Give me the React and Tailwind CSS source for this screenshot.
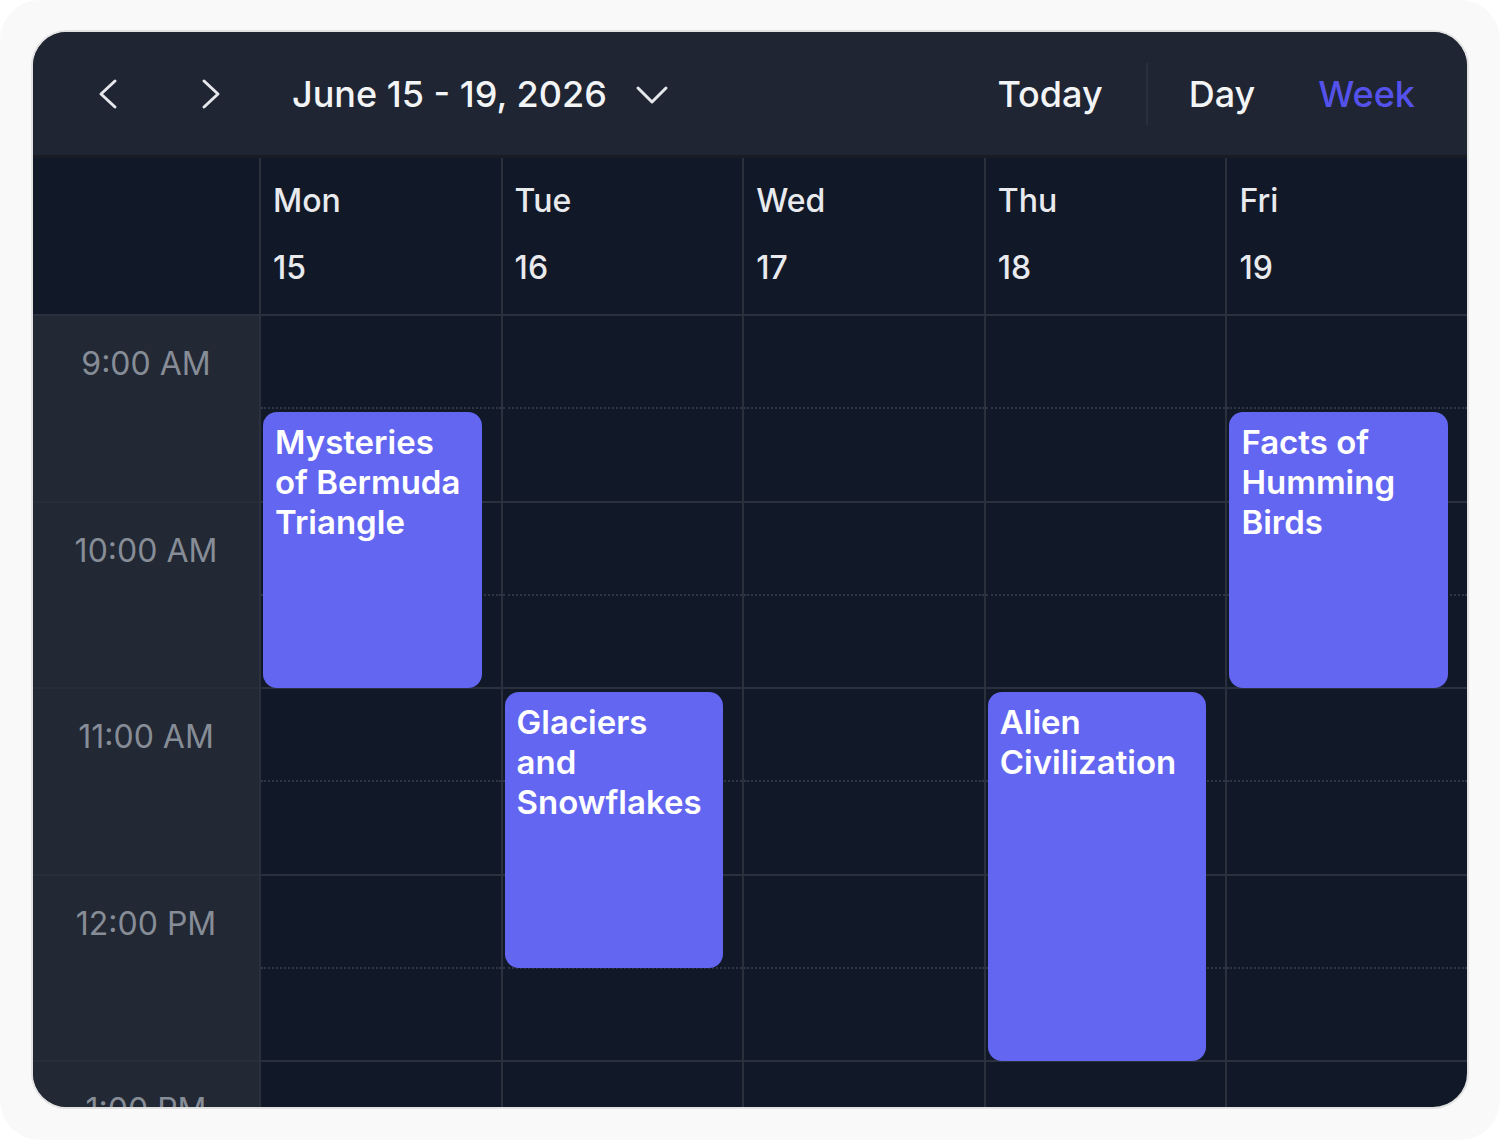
import React from "react";

const days = [
  { name: "Mon", date: "15" },
  { name: "Tue", date: "16" },
  { name: "Wed", date: "17" },
  { name: "Thu", date: "18" },
  { name: "Fri", date: "19" },
];

const hours = ["9:00 AM", "10:00 AM", "11:00 AM", "12:00 PM", "1:00 PM"];

const events = {
  0: [{ title: "Mysteries of Bermuda Triangle", top: 96, height: 276 }],
  1: [{ title: "Glaciers and Snowflakes", top: 376, height: 276 }],
  3: [{ title: "Alien Civilization", top: 376, height: 369 }],
  4: [{ title: "Facts of Humming Birds", top: 96, height: 276 }],
};

function ChevronLeft() {
  return (
    <svg width="24" height="32" viewBox="0 0 24 32" fill="none">
      <polyline points="19,3 5,16 19,29" stroke="#e5e7eb" strokeWidth="3" strokeLinecap="round" strokeLinejoin="round" />
    </svg>
  );
}
function ChevronRight() {
  return (
    <svg width="24" height="32" viewBox="0 0 24 32" fill="none">
      <polyline points="5,3 19,16 5,29" stroke="#e5e7eb" strokeWidth="3" strokeLinecap="round" strokeLinejoin="round" />
    </svg>
  );
}
function ChevronDown() {
  return (
    <svg width="34" height="22" viewBox="0 0 34 22" fill="none">
      <polyline points="3,4 17,18 31,4" stroke="#e5e7eb" strokeWidth="3" strokeLinecap="round" strokeLinejoin="round" />
    </svg>
  );
}

export default function App() {
  return (
    <div className="w-[1500px] h-[1140px] bg-white font-['Inter','Noto_Sans',sans-serif]">
      <div className="w-full h-full rounded-[40px] bg-[#f9f9f9] pl-[31px] pt-[30px]">
        <div className="w-[1438px] h-[1079px] rounded-[36px] border-2 border-[#e2e2e2] overflow-hidden bg-[#111827] flex flex-col">
          {/* Top bar */}
          <div className="h-[126px] shrink-0 bg-[#1f2532] border-b-[3px] border-[#181b21] flex items-center pl-[60px] pr-[52px]">
            <button className="w-[30px] flex items-center justify-center">
              <ChevronLeft />
            </button>
            <button className="ml-[73px] w-[30px] flex items-center justify-center">
              <ChevronRight />
            </button>
            <div className="ml-[66px] text-[36px] leading-[44px] font-medium text-[#f3f4f6]">
              June 15 - 19, 2026
            </div>
            <div className="ml-[28px] mt-[2px]">
              <ChevronDown />
            </div>
            <div className="flex-1" />
            <div className="text-[36px] leading-[44px] font-medium text-[#f3f4f6]">Today</div>
            <div className="ml-[43px] w-[2px] h-[62px] bg-[#2a303c]" />
            <div className="ml-[41px] text-[36px] leading-[44px] font-medium text-[#f3f4f6]">Day</div>
            <div className="ml-[63px] text-[36px] leading-[44px] font-medium text-[#5552ec]">Week</div>
          </div>

          {/* Day header */}
          <div className="h-[158px] shrink-0 flex border-b-2 border-[#2a303c] bg-[#111827]">
            <div className="w-[226px] shrink-0" />
            {days.map((d) => (
              <div key={d.name} className="flex-1 border-l-2 border-[#2a303c] pl-[12px] pt-[23px] flex flex-col gap-[27px]">
                <div className="text-[32px] leading-[40px] font-medium text-[#e8eaee]">{d.name}</div>
                <div className="text-[32px] leading-[40px] font-medium text-[#e8eaee]">{d.date}</div>
              </div>
            ))}
          </div>

          {/* Body */}
          <div className="flex-1 flex min-h-0 overflow-hidden">
            <div className="w-[226px] shrink-0 bg-[#222834] flex flex-col">
              {hours.map((h) => (
                <div key={h} className="h-[186.5px] shrink-0 border-b-2 border-[#272e3a] pt-[24px] text-center text-[32px] leading-[48px] text-[#878d97]">
                  {h}
                </div>
              ))}
            </div>
            {days.map((d, i) => (
              <div key={d.name} className="flex-1 relative border-l-2 border-[#2a303c] flex flex-col">
                {hours.map((h) => (
                  <div key={h} className="h-[186.5px] shrink-0 border-b-2 border-[#2a303c]">
                    <div className="h-[93px] border-b-2 border-dotted border-[#2f3644]" />
                  </div>
                ))}
                {(events[i] || []).map((e) => (
                  <div
                    key={e.title}
                    className="absolute left-[2px] right-[19px] rounded-[14px] bg-[#6366f1] px-[12px] pt-[10px] text-[33px] leading-[40px] font-semibold text-white"
                    style={{ top: e.top, height: e.height }}
                  >
                    {e.title}
                  </div>
                ))}
              </div>
            ))}
          </div>
        </div>
      </div>
    </div>
  );
}
